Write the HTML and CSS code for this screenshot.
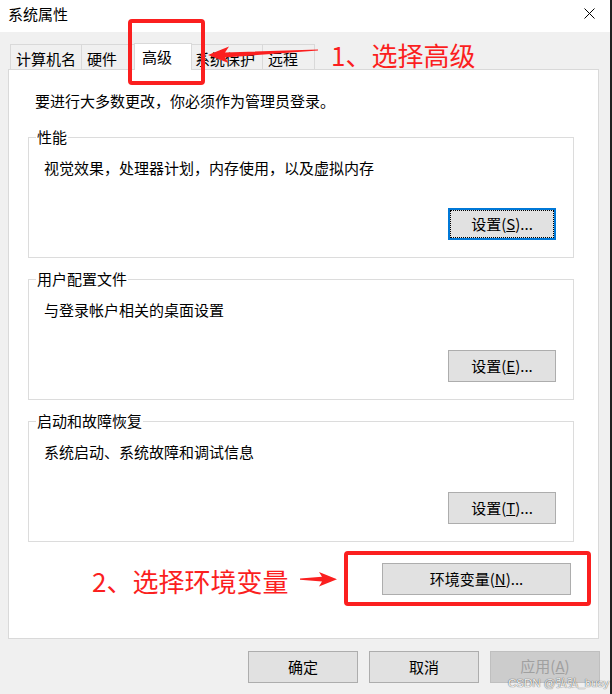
FILE: index.html
```html
<!DOCTYPE html>
<html lang="zh-CN">
<head>
<meta charset="utf-8">
<title>系统属性</title>
<link rel="stylesheet" href="styles.css">
</head>
<body>
<div class="screen">
  <div class="window">
    <div class="titlebar">
      <span class="title">系统属性</span>
      <svg class="close" width="11" height="11" viewBox="0 0 11 11"><path d="M0.5 0.5 L10.5 10.5 M10.5 0.5 L0.5 10.5" stroke="#000" stroke-width="1" fill="none"/></svg>
    </div>
    <div class="client">
      <div class="tabs">
        <div class="tab t1">计算机名</div>
        <div class="tab t2">硬件</div>
        <div class="tab t3 active">高级</div>
        <div class="tab t4">系统保护</div>
        <div class="tab t5">远程</div>
      </div>
      <div class="panel">
        <p class="intro">要进行大多数更改，你必须作为管理员登录。</p>
        <fieldset class="group">
          <legend>性能</legend>
          <p class="desc">视觉效果，处理器计划，内存使用，以及虚拟内存</p>
          <div class="actions"><button class="btn set focused">设置(<u>S</u>)...</button></div>
        </fieldset>
        <fieldset class="group">
          <legend>用户配置文件</legend>
          <p class="desc">与登录帐户相关的桌面设置</p>
          <div class="actions"><button class="btn set">设置(<u>E</u>)...</button></div>
        </fieldset>
        <fieldset class="group">
          <legend>启动和故障恢复</legend>
          <p class="desc">系统启动、系统故障和调试信息</p>
          <div class="actions"><button class="btn set">设置(<u>T</u>)...</button></div>
        </fieldset>
        <div class="env-row"><button class="btn env">环境变量(<u>N</u>)...</button></div>
      </div>
      <div class="footer">
        <button class="btn dlg">确定</button>
        <button class="btn dlg">取消</button>
        <button class="btn dlg disabled">应用(<u>A</u>)</button>
      </div>
    </div>
  </div>
  <div class="edge"></div>

  <div class="annot">
    <div class="mark mark1"></div>
    <div class="note note1">1、选择高级</div>
    <div class="mark mark2"></div>
    <div class="note note2">2、选择环境变量</div>
    <svg class="arrows" width="612" height="694" viewBox="0 0 612 694">
      <polygon points="208,55 229,46.5 225,52.4 318,49.4 318,50.6 225,57.4 228.5,63" fill="#fb1f1f"/>
      <polygon points="300,578.6 322,576.8 319,572 337,579.2 319,586.5 322,581.6 300,579.8" fill="#fb1f1f"/>
    </svg>
    <div class="watermark">CSDN @弘弘_busy</div>
  </div>
</div>
</body>
</html>
```
FILE: styles.css
```css
* { box-sizing: border-box; }

html, body {
  margin: 0;
  padding: 0;
}

body {
  width: 612px;
  height: 694px;
  overflow: hidden;
  background: #1e1e1e;
  font-family: "Noto Sans CJK SC", "Microsoft YaHei", sans-serif;
  font-size: 15px;
  color: #000;
}

.screen {
  position: relative;
  display: flex;
  width: 612px;
  height: 694px;
}

.window {
  width: 610px;
  height: 694px;
  display: flex;
  flex-direction: column;
  background: #f0f0f0;
}

.edge {
  width: 2px;
  background: #202020;
}

/* title bar */
.titlebar {
  flex: none;
  height: 32px;
  background: #fff;
  display: flex;
  justify-content: space-between;
  align-items: flex-start;
  padding: 4px 15px 0 8px;
}

.title {
  line-height: 20px;
}

.close {
  display: block;
  margin-top: 4px;
}

.client {
  flex: 1;
}

/* tabs */
.tabs {
  display: flex;
  align-items: flex-end;
  margin-top: 11px;
  padding-left: 10px;
}

.tab {
  height: 25px;
  padding: 4px 0 0 5px;
  line-height: 20px;
  border: 1px solid #d9d9d9;
  border-bottom: none;
  background: #f0f0f0;
  white-space: nowrap;
}

.tab + .tab { margin-left: -1px; }

.tabs .t1 { width: 72px; }
.tabs .t2 { width: 56px; }
.tabs .t3 {
  width: 58px;
  height: 27px;
  margin-left: -3px;
  margin-bottom: -1px;
  padding: 3px 0 0 7px;
  background: #fff;
  position: relative;
  z-index: 1;
}
.tabs .t4 { width: 74px; margin-left: -3px; }
.tabs .t5 { width: 53px; }

/* panel */
.panel {
  margin-left: 8px;
  width: 591px;
  height: 570px;
  border: 1px solid #d9d9d9;
  background: #fff;
  padding: 21px 0 0 19px;
}

.intro {
  margin: 0 0 16px 7px;
  line-height: 20px;
}

.group {
  margin: 0;
  width: 546px;
  min-width: 0;
  border: 1px solid #dcdcdc;
  padding: 0 17px 17px 7px;
}

.group + .group { margin-top: 11px; }

.group legend {
  padding: 0 1px;
  line-height: 20px;
}

.desc {
  margin: 11px 0 0 8px;
  line-height: 20px;
}

.actions {
  display: flex;
  justify-content: flex-end;
  margin-top: 30px;
}

/* buttons */
.btn {
  height: 32px;
  margin: 0;
  padding: 0;
  border: 1px solid #adadad;
  border-radius: 0;
  background: #e1e1e1;
  color: #000;
  font-family: inherit;
  font-size: 15px;
  line-height: 20px;
}

.btn.set { width: 108px; }

.btn.focused {
  border: 2px solid #0078d7;
  outline: 1px dotted #000;
  outline-offset: -3px;
}

.env-row {
  width: 546px;
  display: flex;
  justify-content: flex-end;
  padding-right: 3px;
  margin-top: 21px;
}

.btn.env { width: 189px; }

.footer {
  display: flex;
  justify-content: flex-end;
  gap: 11px;
  padding-right: 10px;
  margin-top: 12px;
}

.btn.dlg { width: 110px; }

.btn.dlg.disabled {
  padding-bottom: 3px;
  background: #cccccc;
  border-color: #bfbfbf;
  color: #a0a0a0;
}

/* annotations overlay */
.annot {
  position: absolute;
  left: 0;
  top: 0;
  width: 612px;
  height: 694px;
  pointer-events: none;
}

.arrows {
  position: absolute;
  left: 0;
  top: 0;
}

.mark {
  position: absolute;
  border: 4px solid #fb1f1f;
  border-radius: 4px;
}

.mark1 { left: 128px; top: 19px; width: 77px; height: 66px; }
.mark2 { left: 344px; top: 551px; width: 247px; height: 55px; }

.note {
  position: absolute;
  color: #fb1f1f;
  font-size: 26px;
  line-height: 30px;
  white-space: nowrap;
}

.note1 { left: 331px; top: 40px; }
.note2 { left: 92px; top: 566px; }

.watermark {
  position: absolute;
  left: 508px;
  top: 676px;
  font-family: "Liberation Sans", "Noto Sans CJK SC", sans-serif;
  font-size: 11.5px;
  line-height: 14px;
  color: rgba(255, 255, 255, 0.95);
  text-shadow: 0 0 1px rgba(0, 0, 0, 0.6), 0 0 1px rgba(0, 0, 0, 0.4);
  white-space: nowrap;
}
```
